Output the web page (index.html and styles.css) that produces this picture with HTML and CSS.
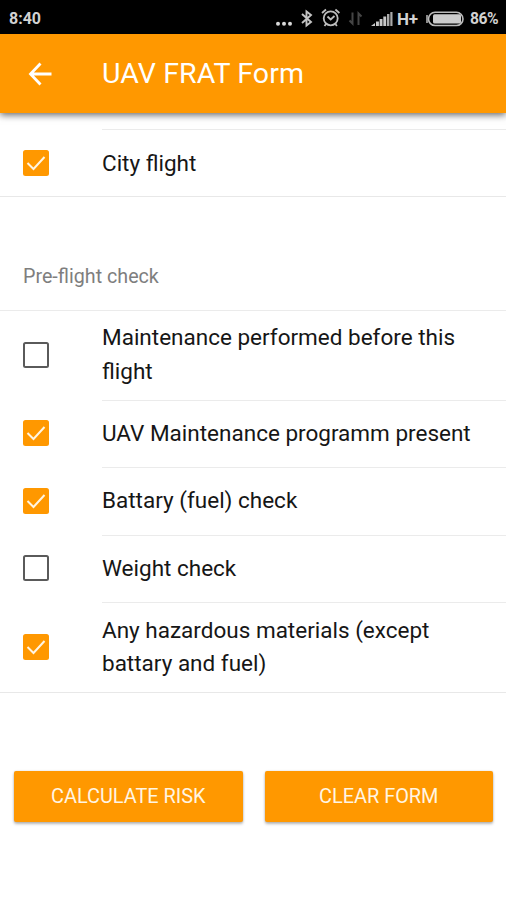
FILE: index.html
```html
<!DOCTYPE html>
<html lang="en">
<head>
<meta charset="utf-8">
<title>UAV FRAT Form</title>
<link rel="stylesheet" href="styles.css">
</head>
<body>
<div class="status">
  <span class="clock">8:40</span>
  <svg class="indicators" width="190" height="34" viewBox="276 0 190 34">
    <g fill="#d8d8d8"><circle cx="278" cy="22.7" r="2"/><circle cx="284" cy="22.7" r="2"/><circle cx="290" cy="22.7" r="2"/></g>
    <path d="M302 13l9 8-4.500 3.500v-14l4.500 3.500-9 8" fill="none" stroke="#c4c4c4" stroke-width="1.9"/>
    <g fill="none" stroke="#bdbdbd" stroke-width="1.8"><circle cx="330.700" cy="17.300" r="7"/><path d="M322 12l4-3.500M339.400 12l-4-3.500M327.500 15.500l3.200 3 3.800-3.500M326 23l-1.500 2M335.400 23l1.500 2"/></g>
    <path d="M352.500 11.500v11l-3-3M358.500 24V12.500l3 3" fill="none" stroke="#454545" stroke-width="2"/>
    <g fill="#c8c8c8"><path d="M371 25l4-3v3z"/><rect x="376" y="20.500" width="2.900" height="4.500"/><rect x="379.600" y="18" width="2.900" height="7"/><rect x="383.300" y="15.500" width="2.900" height="9.500"/><rect x="387" y="13" width="2.400" height="12" fill="#aaa"/><rect x="390.300" y="11" width="2.200" height="14" fill="#aaa"/></g>
    <rect x="428.500" y="11.300" width="34.500" height="13.200" rx="6.600" fill="none" stroke="#bbb" stroke-width="1.600"/>
    <path d="M427 14v8" stroke="#bbb" stroke-width="1.500"/>
    <rect x="433" y="13.300" width="28" height="9.200" rx="1.500" fill="#ccc"/>
  </svg>
  <span class="network">H+</span>
  <span class="battery">86%</span>
</div>
<header class="appbar">
  <svg class="back" width="24" height="24" viewBox="0 0 24 24"><path d="M23.500 12H2.500M12.500 1.500L2.500 12l10 10.500" fill="none" stroke="#fff" stroke-width="2.800"/></svg>
  <h1>UAV FRAT Form</h1>
</header>
<main>
  <ul class="list first">
    <li><span class="box on"><svg viewBox="0 0 26 26"><path d="M4.500 13l6 6L21.500 7"/></svg></span><div class="label"><span>City flight</span></div></li>
  </ul>
  <h2>Pre-flight check</h2>
  <ul class="list second">
    <li class="tall"><span class="box"></span><div class="label"><span>Maintenance performed before this<br>flight</span></div></li>
    <li><span class="box on"><svg viewBox="0 0 26 26"><path d="M4.500 13l6 6L21.500 7"/></svg></span><div class="label"><span>UAV Maintenance programm present</span></div></li>
    <li><span class="box on"><svg viewBox="0 0 26 26"><path d="M4.500 13l6 6L21.500 7"/></svg></span><div class="label"><span>Battary (fuel) check</span></div></li>
    <li><span class="box"></span><div class="label"><span>Weight check</span></div></li>
    <li class="tall"><span class="box on"><svg viewBox="0 0 26 26"><path d="M4.500 13l6 6L21.500 7"/></svg></span><div class="label"><span>Any hazardous materials (except<br>battary and fuel)</span></div></li>
  </ul>
  <div class="actions"><button>CALCULATE RISK</button><button>CLEAR FORM</button></div>
</main>
</body>
</html>
```
FILE: styles.css
```css
* { box-sizing: border-box; }
body { margin: 0; height: 900px; background: #fff; font-family: Roboto, sans-serif; color: #161616; overflow: hidden; }
.status { height: 34px; background: #000; display: grid; grid-template-columns: 1fr 190px 40px; align-items: center; color: #d2d2d2; font-size: 16px; font-weight: 700; padding-left: 9px; line-height: 34px; }
.clock { grid-row: 1; grid-column: 1; padding-top: 2px; }
.indicators { grid-row: 1; grid-column: 2; display: block; }
.network { grid-row: 1; grid-column: 2; padding: 2px 0 0 121px; font-size: 17px; letter-spacing: -.3px; }
.battery { grid-row: 1; grid-column: 3; padding: 2px 0 0 4px; font-size: 15.700px; letter-spacing: -.5px; }
.appbar { height: 79px; background: #ff9800; color: #fff; display: flex; align-items: center; padding-left: 28px; position: relative; box-shadow: 0 2px 7px rgba(0,0,0,.6); }
.back { display: block; margin-right: 50px; }
h1 { margin: 0; font-size: 28.500px; font-weight: 400; line-height: 40px; letter-spacing: .1px; }
.list { list-style: none; margin: 0; padding: 0; }
.first { margin-top: 16px; border-bottom: 1px solid #e8e8e8; }
.second { border-top: 1px solid #ebebeb; border-bottom: 1px solid #e8e8e8; }
li { height: 67.500px; display: flex; align-items: center; padding-left: 23px; }
.first li { height: 67px; }
.first .label { padding-top: 1px; }
li.tall { height: 89.500px; }
li.tall:first-child { height: 88.500px; }
.label { flex: 1; height: 100%; margin-left: 53px; display: flex; align-items: center; border-top: 1px solid #ebebeb; font-size: 22.500px; line-height: 33.700px; white-space: nowrap; }
.second li:first-child .label { border-top: 0; padding-bottom: 1px; }
.box { width: 26px; height: 26px; border: 2.500px solid #5a5a5a; border-radius: 2.500px; flex: none; }
.first .box { margin-top: 1px; }
.box.on { border: 0; background: #ff9800; }
.box svg { display: block; width: 26px; height: 26px; fill: none; stroke: #fff5e3; stroke-width: 2; }
h2 { margin: 0; height: 113px; padding: 66px 0 0 23px; font-size: 19.700px; font-weight: 400; line-height: 28px; color: #7e7e7e; }
.actions { display: grid; grid-template-columns: 1fr 1fr; gap: 22px; padding: 78.500px 13px 0 14px; }
button { height: 51px; border: 0; border-radius: 2px; background: #ff9800; color: #fff5e3; font: 400 19.900px/51px Roboto, sans-serif; padding: 0; box-shadow: 0 2px 3px rgba(0,0,0,.28), 0 0 2px rgba(0,0,0,.15); }
```
